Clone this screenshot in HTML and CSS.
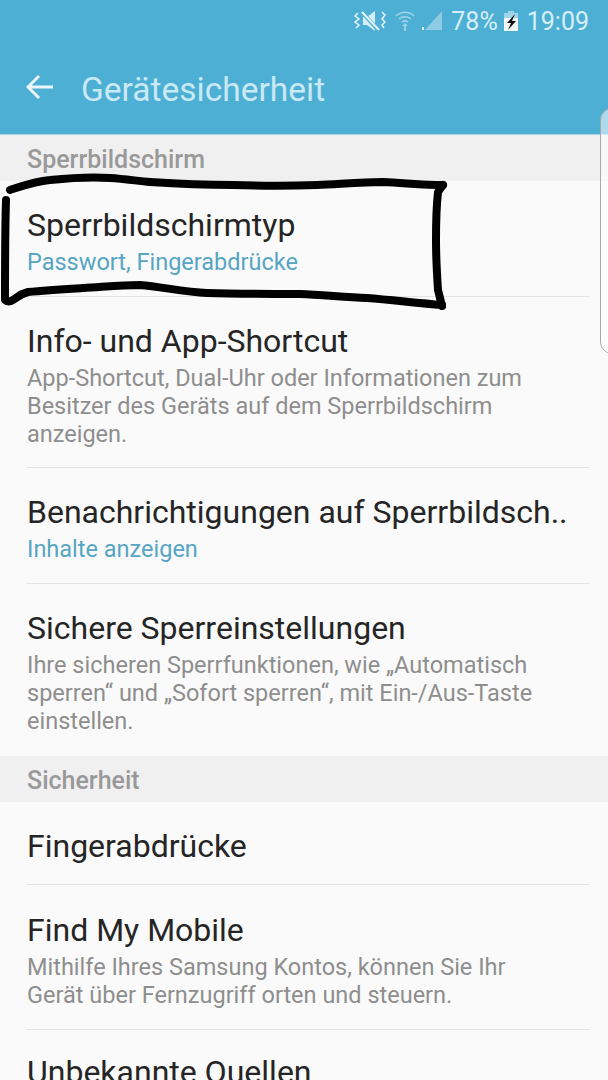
FILE: index.html
```html
<!DOCTYPE html>
<html>
  <head>
    <meta charset="UTF-8">
    <meta name="viewport" content="width=device-width, initial-scale=1.0">
    <title>Gerätesicherheit</title>
    <link rel="stylesheet" href="styles.css">
  </head>
  <body>
    <div class="phone">
      <!-- Status bar -->
      <div class="statusbar">
        <svg class="ic-mute" width="32" height="22" viewBox="0 0 32 22">
          <path d="M9 7h4l8-6v20l-8-6H9z" fill="#d6eff8"/>
          <path d="M7 1l18 20" stroke="#4dafd3" stroke-width="4"/>
          <path d="M8 2l17 18" stroke="#e6f5fb" stroke-width="2"/>
          <path d="M4 3L1 6l4 3-4 3 4 3-3 3M28 2l3 3-3 4 3 3-3 3 2 3" fill="none" stroke="#e6f5fb" stroke-width="1.500"/>
        </svg>
        <svg class="ic-wifi" width="20" height="22" viewBox="0 0 20 22">
          <path d="M1 6c5-5 13-5 18 0M4 9c3.500-3 8.500-3 12 0M7 12c2-1.500 4-1.500 6 0" fill="none" stroke="#9fd3e7" stroke-width="1.500"/>
          <path d="M10 13l3 3h-2v5H9v-5H7z" fill="#9fd3e7"/>
        </svg>
        <svg class="ic-signal" width="22" height="20" viewBox="0 0 22 20">
          <path d="M21 0v19H4z" fill="#8fcbe2"/>
          <rect x="1" y="16" width="2" height="3" fill="#d6eff8"/>
        </svg>
        <span class="batt-text">78%</span>
        <svg class="ic-batt" width="14" height="20" viewBox="0 0 14 20">
          <rect x="4" y="0" width="6" height="3" fill="#9fd3e7"/>
          <rect x="0" y="2" width="14" height="5" fill="#9fd3e7"/>
          <rect x="0" y="7" width="14" height="13" fill="#f2f8fa"/>
          <path d="M11 3L3 12h4l-3 7 8-9H8l3-7z" fill="#111"/>
        </svg>
        <span class="clock">19:09</span>
      </div>

      <!-- Toolbar -->
      <div class="toolbar">
        <svg class="back" width="28" height="26" viewBox="0 0 28 26">
          <path d="M27 13H3M13 2L2 13l11 11" fill="none" stroke="#eaf6fb" stroke-width="3"/>
        </svg>
        <span class="toolbar-title">Gerätesicherheit</span>
      </div>

      <div class="section">Sperrbildschirm</div>
      <div class="row row-two">
        <div class="row-title">Sperrbildschirmtyp</div>
        <div class="row-sub accent">Passwort, Fingerabdrücke</div>
      </div>
      <div class="row row-four-a">
        <div class="row-title">Info- und App-Shortcut</div>
        <div class="row-sub">App-Shortcut, Dual-Uhr oder Informationen zum<br>Besitzer des Geräts auf dem Sperrbildschirm<br>anzeigen.</div>
      </div>
      <div class="row row-two">
        <div class="row-title">Benachrichtigungen auf Sperrbildsch..</div>
        <div class="row-sub accent">Inhalte anzeigen</div>
      </div>
      <div class="row row-four-b last">
        <div class="row-title">Sichere Sperreinstellungen</div>
        <div class="row-sub">Ihre sicheren Sperrfunktionen, wie „Automatisch<br>sperren“ und „Sofort sperren“, mit Ein-/Aus-Taste<br>einstellen.</div>
      </div>

      <div class="section">Sicherheit</div>
      <div class="row row-one">
        <div class="row-title">Fingerabdrücke</div>
      </div>
      <div class="row row-three">
        <div class="row-title">Find My Mobile</div>
        <div class="row-sub">Mithilfe Ihres Samsung Kontos, können Sie Ihr<br>Gerät über Fernzugriff orten und steuern.</div>
      </div>
      <div class="row row-end last">
        <div class="row-title">Unbekannte Quellen</div>
      </div>

      <!-- Edge panel handle -->
      <div class="edge-handle"></div>

      <!-- Hand drawn marker box -->
      <svg class="marker" width="460" height="145" viewBox="0 0 460 145">
        <path d="M10 20C22 16 36 11 50 10C70 8 95 7 110 8C125 9 138 11 150 12C180 14 205 15 233 15C262 16 290 16 317 15C340 14 362 12 383 12C405 13 425 15 443 15" />
        <path d="M443 15L438 22C436 40 436 55 436 70C436 90 437 105 438 120L442 136" />
        <path d="M6 30C5 62 5 96 5 130C8 133 12 131 16 128C20 125 24 123 28 122C46 120 65 119 83 118C102 117 121 115 140 115C162 117 185 122 207 123C238 124 269 124 300 124C322 125 345 127 367 128C392 130 417 133 442 135" />
      </svg>
    </div>
  </body>
</html>
```

FILE: styles.css
```css
body {
  margin: 0;
  background: #fafafa;
  font-family: Roboto, sans-serif;
}

.phone {
  position: relative;
  width: 608px;
  height: 1080px;
  overflow: hidden;
  background: #fafafa;
}

.statusbar {
  height: 42px;
  background: #4dafd3;
  display: flex;
  align-items: center;
  justify-content: flex-end;
  padding-right: 19px;
  color: #d6eff8;
  font-size: 25px;
}

.ic-mute {
  margin-right: 9px;
}

.ic-wifi {
  margin-right: 6px;
}

.ic-signal {
  margin-right: 8px;
}

.ic-batt {
  margin-left: 6px;
  margin-right: 9px;
}

.toolbar {
  height: 93px;
  background: #4dafd3;
  display: flex;
  align-items: center;
  padding-left: 26px;
  padding-bottom: 2px;
  box-sizing: border-box;
  border-bottom: 1px solid #a9d3e2;
}

.back {
  margin-right: 27px;
}

.toolbar-title {
  font-size: 33.500px;
  color: #c9e9f5;
  margin-top: 4px;
}

.section {
  height: 46px;
  background: #f0f0f0;
  color: #999;
  font-size: 25px;
  font-weight: 500;
  line-height: 50px;
  padding-left: 27px;
}

.row {
  margin-left: 27px;
  margin-right: 19px;
  border-bottom: 1px solid #e3e3e3;
  box-sizing: border-box;
}

.row.last {
  border-bottom: none;
}

.row-one {
  height: 83px;
  padding-top: 25px;
}

.row-two {
  height: 116px;
  padding-top: 25px;
}

.row-three {
  height: 145px;
  padding-top: 26px;
}

.row-four-a {
  height: 171px;
  padding-top: 25px;
}

.row-four-b {
  height: 172px;
  padding-top: 25px;
}

.row-end {
  padding-top: 23px;
}

.row-title {
  font-size: 32px;
  line-height: 38px;
  color: #252525;
}

.row-sub {
  font-size: 23.500px;
  line-height: 28px;
  margin-top: 4px;
  color: #8e8e8e;
}

.row-sub.accent {
  color: #56a5c3;
}

.edge-handle {
  position: absolute;
  left: 600px;
  top: 108px;
  width: 24px;
  height: 246px;
  box-sizing: border-box;
  border: 1px solid #a8a8a8;
  border-radius: 20px;
  background: rgba(255, 255, 255, 0.55);
}

.marker {
  position: absolute;
  left: 0;
  top: 170px;
}

.marker path {
  fill: none;
  stroke: #000;
  stroke-width: 8;
  stroke-linecap: round;
  stroke-linejoin: round;
}
```
